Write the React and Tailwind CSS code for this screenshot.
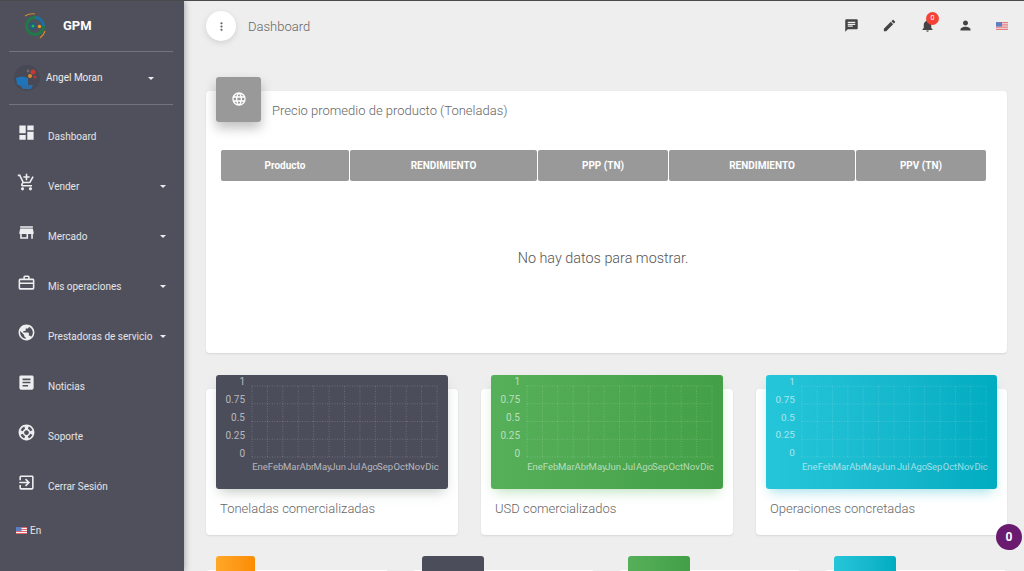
import React from 'react';
import {
  MdDashboard, MdAddShoppingCart, MdStore, MdPublic,
  MdArticle, MdSupport, MdExitToApp, MdChat, MdEdit, MdNotifications, MdPerson, MdMoreVert, MdLanguage,
  MdViewModule,
} from 'react-icons/md';

const Flag = ({ className }) => (
  <svg viewBox="0 0 22 14" className={className}>
    <rect width="22" height="14" fill="#f3f3f3" />
    <rect y="0" width="22" height="2" fill="#e0646a" />
    <rect y="4" width="22" height="2" fill="#e0646a" />
    <rect y="8" width="22" height="2" fill="#e0646a" />
    <rect y="12" width="22" height="2" fill="#e0646a" />
    <rect width="11" height="8" fill="#5c7fc4" />
  </svg>
);

const Caret = () => <span className="w-0 h-0 border-x-[3px] border-x-transparent border-t-[3px] border-t-white/90" />;

const Logo = () => (
  <svg viewBox="0 0 24 26" className="w-[24px] h-[26px]">
    <circle cx="12" cy="13" r="8.5" fill="none" stroke="#1f7a4a" strokeWidth="3" />
    <path d="M12 4.5 A8.5 8.5 0 0 1 20.5 13" fill="none" stroke="#1b6ea8" strokeWidth="3" />
    <circle cx="10" cy="13" r="3.4" fill="#1d5f7a" />
    <circle cx="10" cy="13" r="1.5" fill="#2fae5c" />
    <circle cx="16.5" cy="13.5" r="1.7" fill="#f09a24" />
    <path d="M2 3 Q7 0 12 1" fill="none" stroke="#d08a2a" strokeWidth="1.2" />
    <path d="M22 18 Q21 22 17 25" fill="none" stroke="#d08a2a" strokeWidth="1.2" />
  </svg>
);

const Avatar = () => (
  <svg viewBox="0 0 26 26" className="w-[26px] h-[26px]">
    <circle cx="13" cy="13" r="13" fill="#484954" />
    <path d="M2 13 Q8 10 14 13 L14 21 Q7 23 3 19 Z" fill="#1f74b8" />
    <path d="M6 20 H19 L17 24 H9 Z" fill="#2a6da8" />
    <circle cx="19" cy="7" r="2.5" fill="#c23b32" />
    <circle cx="16" cy="11" r="2" fill="#d98a2b" />
    <circle cx="21" cy="12" r="1.5" fill="#b83a34" />
    <circle cx="14" cy="6" r="1.4" fill="#6a6b76" />
  </svg>
);

const Briefcase = ({ className }) => (
  <svg viewBox="0 0 24 24" fill="currentColor" fillRule="evenodd" className={className} width="1em" height="1em">
    <path d="M20 7h-4V5a2 2 0 0 0-2-2h-4a2 2 0 0 0-2 2v2H4a2 2 0 0 0-2 2v10a2 2 0 0 0 2 2h16a2 2 0 0 0 2-2V9a2 2 0 0 0-2-2zM10 5h4v2h-4V5zM4 9h16v3H4V9zm0 10v-5h16v5H4z" />
  </svg>
);

const menu = [
  { label: 'Dashboard', icon: MdDashboard },
  { label: 'Vender', icon: MdAddShoppingCart, sub: true },
  { label: 'Mercado', icon: MdStore, sub: true },
  { label: 'Mis operaciones', icon: Briefcase, sub: true },
  { label: 'Prestadoras de servicio', icon: MdPublic, sub: true },
  { label: 'Noticias', icon: MdArticle },
  { label: 'Soporte', icon: MdSupport },
  { label: 'Cerrar Sesión', icon: MdExitToApp },
];

const months = ['Ene', 'Feb', 'Mar', 'Abr', 'May', 'Jun', 'Jul', 'Ago', 'Sep', 'Oct', 'Nov', 'Dic'];
const yLabels = ['1', '0.75', '0.5', '0.25', '0'];

const Chart = () => (
  <svg viewBox="0 0 232 114" className="w-full h-[114px] block" fontFamily="Roboto, sans-serif">
    {months.concat('').map((_, i) => (
      <line key={i} x1={36 + i * 15.42} x2={36 + i * 15.42} y1="11" y2="82" stroke="rgba(255,255,255,.18)" strokeDasharray="1 1.5" />
    ))}
    {yLabels.map((_, i) => (
      <line key={i} x1="36" x2="221" y1={11 + i * 17.75} y2={11 + i * 17.75} stroke="rgba(255,255,255,.18)" strokeDasharray="1 1.5" />
    ))}
    {yLabels.map((l, i) => (
      <text key={l} x="29" y={9.5 + i * 18} fontSize="10" textAnchor="end" fill="rgba(255,255,255,.6)">{l}</text>
    ))}
    {months.map((m, i) => (
      <text key={m} x={44 + i * 15.64} y="95" fontSize="9.5" textAnchor="middle" fill="rgba(255,255,255,.6)">{m}</text>
    ))}
  </svg>
);

const charts = [
  { title: 'Toneladas comercializadas', box: 'bg-[#4c4d5a] shadow-[0_6px_12px_-4px_rgba(60,90,70,.35)]' },
  { title: 'USD comercializados', box: 'bg-gradient-to-r from-[#56b05a] to-[#43a047] shadow-[0_6px_12px_-4px_rgba(76,175,80,.4)]' },
  { title: 'Operaciones concretadas', box: 'bg-gradient-to-r from-[#26c6da] to-[#00acc1] shadow-[0_6px_12px_-4px_rgba(0,172,193,.4)]' },
];

const stats = [
  { box: 'w-[39px] bg-gradient-to-r from-[#ffa726] to-[#fb8c00]', icon: true },
  { box: 'w-[62px] bg-[#4c4d5a]' },
  { box: 'w-[62px] bg-gradient-to-r from-[#56b05a] to-[#43a047]' },
  { box: 'w-[62px] bg-gradient-to-r from-[#26c6da] to-[#00acc1]' },
];

const columns = ['Producto', 'RENDIMIENTO', 'PPP (TN)', 'RENDIMIENTO', 'PPV (TN)'];

export default function App() {
  return (
    <div className="relative h-screen overflow-hidden bg-[#eeeeee] font-['Roboto',sans-serif] border-t border-t-[#4a4a4a] flex">
      {/* Sidebar */}
      <aside className="w-[184px] shrink-0 h-full bg-[#4f505c] text-white shadow-[1px_0_6px_rgba(0,0,0,.3)] flex flex-col">
        <div className="ml-[9px] mr-[11px] h-[51px] border-b border-white/20 flex items-center pl-[14px] gap-[16px]">
          <Logo />
          <span className="text-[13px] font-bold">GPM</span>
        </div>
        <div className="ml-[9px] mr-[11px] h-[53px] border-b border-white/20 flex items-center pl-[5px] pr-[19px]">
          <Avatar />
          <span className="ml-[6px] -mt-[2px] text-[10px] text-white/90 flex-1">Angel Moran</span>
          <Caret />
        </div>
        <nav className="mt-[6px] flex flex-col">
          {menu.map((m) => (
            <div key={m.label} className="h-[50px] flex items-center pl-[17px] pr-[18px]">
              <m.icon className="text-[19px] -mt-[8px] shrink-0 text-white/90" />
              <span className="ml-[12px] text-[10px] text-white/85 flex-1 whitespace-nowrap">{m.label}</span>
              {m.sub && <Caret />}
            </div>
          ))}
        </nav>
        <div className="mt-[12px] pl-[16px] flex items-center gap-[3px] text-[10px] text-white/85">
          <Flag className="w-[11px] h-[7px]" />
          <span>En</span>
        </div>
      </aside>

      {/* Main */}
      <main className="flex-1 min-w-0 pl-[22px] pr-[17px]">
        <header className="h-[50px] pt-[10px] flex items-start">
          <button className="w-[30px] h-[30px] rounded-full bg-white shadow-[0_2px_6px_rgba(0,0,0,.12)] flex items-center justify-center text-[#666]">
            <MdMoreVert className="text-[13px]" />
          </button>
          <span className="ml-[12px] mt-[6px] text-[13px] font-light text-[#666]">Dashboard</span>
          <div className="ml-auto mr-[-1px] flex items-center text-[#444] mt-[7px]">
            <MdChat className="text-[15px] mr-[23px]" />
            <MdEdit className="text-[15px] mr-[23px]" />
            <div className="relative mr-[23px]">
              <MdNotifications className="text-[15px]" />
              <span className="absolute -top-[6px] left-[6px] w-[13px] h-[13px] rounded-full bg-[#f44336] text-white text-[7px] flex items-center justify-center">0</span>
            </div>
            <MdPerson className="text-[15px] mr-[23px]" />
            <Flag className="w-[12px] h-[8px]" />
          </div>
        </header>

        {/* Price table */}
        <section className="mt-[40px] h-[262px] bg-white rounded-[4px] shadow-[0_1px_2px_rgba(0,0,0,.1)] flex flex-col">
          <div className="flex items-start">
            <div className="ml-[10px] -mt-[14px] w-[45px] h-[45px] pb-[2px] rounded-[3px] bg-[#999999] shadow-[0_6px_12px_rgba(0,0,0,.25)] flex items-center justify-center text-white">
              <MdLanguage className="text-[16px]" />
            </div>
            <h2 className="ml-[11px] mt-[10px] text-[13px] font-light text-[#666]">Precio promedio de producto (Toneladas)</h2>
          </div>
          <div className="mt-[28px] mx-[15px] grid grid-cols-[128px_187px_130px_186px_130px] gap-px">
            {columns.map((c, i) => (
              <div key={i} className="h-[31px] rounded-[2px] bg-[#999999] text-white text-[10px] font-bold flex items-center justify-center">{c}</div>
            ))}
          </div>
          <p className="mt-[67px] pr-[7px] text-center text-[14.4px] font-light text-[#555]">No hay datos para mostrar.</p>
        </section>

        {/* Charts */}
        <section className="mt-[36px] grid grid-cols-[252px_252px_251px] gap-[23px]">
          {charts.map((c) => (
            <div key={c.title} className="h-[146px] bg-white rounded-[4px] shadow-[0_1px_2px_rgba(0,0,0,.1)] px-[10px]">
              <div className={`-mt-[14px] h-[114px] rounded-[3px] ${c.box}`}>
                <Chart />
              </div>
              <p className="mt-[10px] px-[4px] text-[13px] font-light text-[#666]">{c.title}</p>
            </div>
          ))}
        </section>

        {/* Stats */}
        <section className="mt-[35px] grid grid-cols-4 gap-[23px]">
          {stats.map((s, i) => (
            <div key={i} className="h-[60px] bg-white rounded-[4px] shadow-[0_1px_2px_rgba(0,0,0,.1)] px-[10px]">
              <div className={`-mt-[14px] h-[50px] rounded-[3px] flex justify-center pt-[12px] ${s.box}`}>
                {s.icon && <MdViewModule className="text-[15px] text-white" />}
              </div>
            </div>
          ))}
        </section>
      </main>

      <div className="absolute left-[996px] top-[523px] w-[26px] h-[26px] rounded-full bg-[#6a1b6f] text-white text-[12px] font-bold flex items-center justify-center">0</div>
    </div>
  );
}
